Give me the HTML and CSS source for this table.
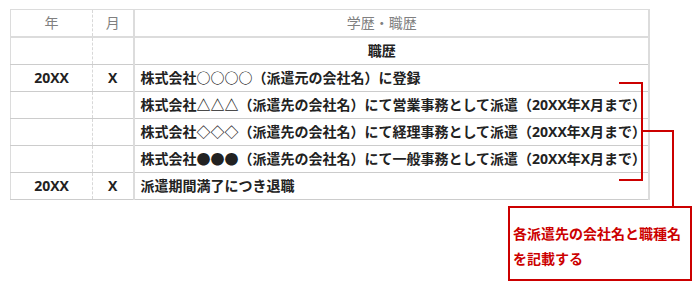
FILE: index.html
```html
<!DOCTYPE html>
<html lang="ja">
<head>
<meta charset="utf-8">
<link rel="stylesheet" href="styles.css">
</head>
<body>
<div class="page">
  <table class="resume">
    <colgroup>
      <col class="c-year">
      <col class="c-month">
      <col class="c-body">
    </colgroup>
    <thead>
      <tr>
        <th class="year">年</th>
        <th class="month">月</th>
        <th class="body center">学歴・職歴</th>
      </tr>
    </thead>
    <tbody>
      <tr>
        <td class="year"></td>
        <td class="month"></td>
        <td class="body center">職歴</td>
      </tr>
      <tr>
        <td class="year">20XX</td>
        <td class="month">X</td>
        <td class="body">株式会社○○○○（派遣元の会社名）に登録</td>
      </tr>
      <tr>
        <td class="year"></td>
        <td class="month"></td>
        <td class="body">株式会社△△△（派遣先の会社名）にて営業事務として派遣（20XX年X月まで）</td>
      </tr>
      <tr>
        <td class="year"></td>
        <td class="month"></td>
        <td class="body">株式会社◇◇◇（派遣先の会社名）にて経理事務として派遣（20XX年X月まで）</td>
      </tr>
      <tr>
        <td class="year"></td>
        <td class="month"></td>
        <td class="body">株式会社●●●（派遣先の会社名）にて一般事務として派遣（20XX年X月まで）</td>
      </tr>
      <tr>
        <td class="year">20XX</td>
        <td class="month">X</td>
        <td class="body">派遣期間満了につき退職</td>
      </tr>
    </tbody>
  </table>

  <svg class="bracket" width="700" height="292" viewBox="0 0 700 292" aria-hidden="true">
    <polyline points="619,83 642,83 642,180 619,180" fill="none" stroke="#cc0000" stroke-width="2"/>
    <polyline points="642,131 673,131 673,207" fill="none" stroke="#cc0000" stroke-width="2"/>
  </svg>

  <div class="note">各派遣先の会社名と職種名<br>を記載する</div>
</div>
</body>
</html>
```

FILE: styles.css
```css
html, body {
  margin: 0;
  padding: 0;
  background: #ffffff;
}

.page {
  position: relative;
  width: 700px;
  height: 292px;
  padding: 9px 0 0 10px;
  box-sizing: border-box;
  font-family: "Open Sans", "Noto Sans CJK JP", sans-serif;
}

.resume {
  border-collapse: collapse;
  table-layout: fixed;
  width: 640px;
  border-top: 1px solid #dcdcdc;
  border-left: 1px solid #dcdcdc;
  border-right: 2px solid #dcdcdc;
  border-bottom: 1px solid #c4c4c4;
}

.c-year { width: 82px; }
.c-month { width: 41px; }

.resume th,
.resume td {
  height: 26px;
  padding: 0;
  font-size: 14px;
  line-height: 26px;
  vertical-align: middle;
  white-space: nowrap;
}

.resume th {
  font-weight: 400;
  color: #808080;
  border-bottom: 2px solid #dcdcdc;
}

.resume td {
  font-weight: 700;
  color: #222222;
  border-bottom: 1px solid #cccccc;
}

.resume .year {
  text-align: center;
  border-right: 1px dashed #d8d8d8;
}

.resume .month {
  text-align: center;
  border-right: 2px solid #dcdcdc;
}

.resume .body {
  text-align: left;
  padding-left: 6px;
}

.resume .body.center {
  text-align: center;
  padding-right: 25px;
}

.bracket {
  position: absolute;
  left: 0;
  top: 0;
  pointer-events: none;
}

.note {
  position: absolute;
  left: 508px;
  top: 206px;
  width: 177px;
  height: 58px;
  padding: 13px 0 0 3px;
  border: 2px solid #cc0000;
  background: #ffffff;
  color: #cc0000;
  font-size: 14px;
  font-weight: 700;
  line-height: 25px;
}
```
